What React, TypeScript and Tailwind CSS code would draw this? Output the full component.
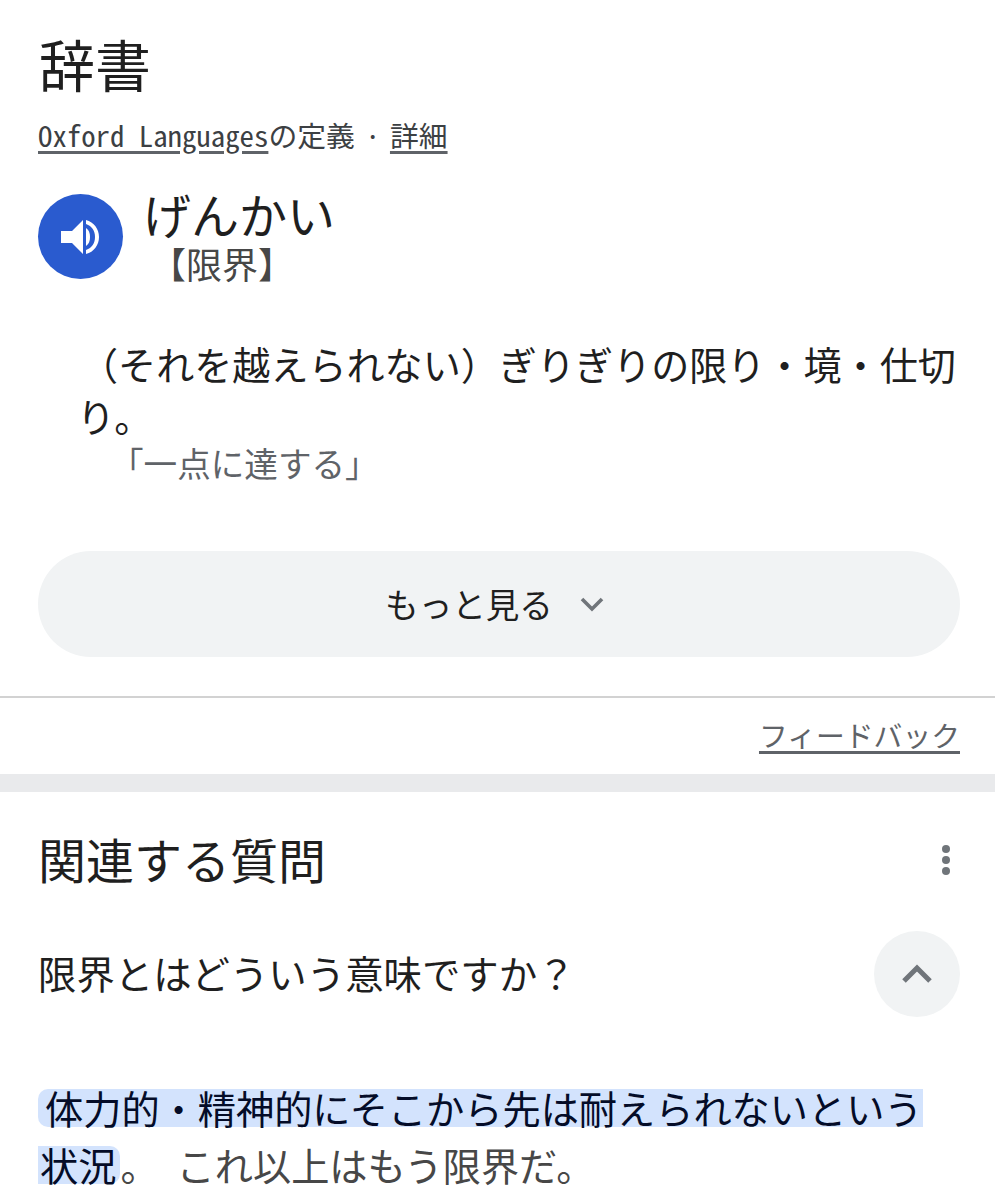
export default function App() {
  return (
    <div className="w-[995px] h-[1200px] overflow-hidden bg-white text-[#1f1f1f] font-['Noto_Sans_CJK_JP',sans-serif]">
      <section className="px-[38px]">
        <h1 className="ml-[1px] pt-[30px] text-[56px] leading-[66px] font-normal">辞書</h1>
        <p className="mt-[21px] text-[28.8px] leading-[36px] text-[#3c4043] whitespace-nowrap">
          <span className="underline decoration-[3px] decoration-[#5f6368] underline-offset-[4px] font-['Noto_Sans_Mono_CJK_JP',monospace]">Oxford Languages</span>
          の定義
          <span className="ml-[2px] mr-[1px] px-[8px]">·</span>
          <span className="underline decoration-[3px] decoration-[#5f6368] underline-offset-[4px]">詳細</span>
        </p>
        <div className="mt-[41px] flex items-start">
          <div className="flex h-[85px] w-[85px] items-center justify-center rounded-full bg-[#2a5bcf]">
            <svg className="ml-[2px]" width="44" height="44" viewBox="0 0 44 44" fill="white">
              <path d="M1 14h11L23 3v34L12 26H1z" transform="translate(0 2)" />
              <path d="M26 13c3 2 4 5 4 9s-1 7-4 9z" />
              <path d="M26 5c8 2 13 9 13 17s-5 15-13 17v-4c6-2 9-7 9-13s-3-11-9-13z" />
            </svg>
          </div>
          <div className="ml-[20px] -mt-[9px]">
            <div className="text-[48px] leading-[56px]">げんかい</div>
            <div className="ml-[7px] mt-[2px] text-[36px] leading-[40px] text-[#474747]">【限界】</div>
          </div>
        </div>
        <div className="mt-[55px] pl-[39px] text-[38.1px] leading-[52px] text-[#1f1f1f]">
          <div className="w-[885px] indent-[3px]">（それを越えられない）ぎりぎりの限り・境・仕切り。</div>
          <div className="pl-[33px] -mt-[2px] text-[33.6px] leading-[46px] text-[#5f6368]">「一点に達する」</div>
        </div>
        <button className="mt-[65px] flex h-[106px] w-[922px] items-center justify-center gap-[24px] rounded-[53px] bg-[#f1f3f4] pr-[6px] text-[33.6px]">
          <span>もっと見る</span>
          <svg width="30" height="30" viewBox="0 0 30 30" fill="none" stroke="#70757a" strokeWidth="3.6">
            <path d="M5 10l10 10 10-10" />
          </svg>
        </button>
      </section>
      <div className="mt-[39px] h-[2px] bg-[#d2d2d2]" />
      <div className="flex h-[76px] items-center justify-end pr-[35px] text-[28.8px] text-[#5f6368]">
        <span className="-mt-[2px] underline decoration-[3px] underline-offset-[4px]">フィードバック</span>
      </div>
      <div className="h-[18px] bg-[#e9eaec]" />
      <section className="px-[38px]">
        <div className="flex items-center justify-between pt-[38px]">
          <h2 className="text-[48px] leading-[60px] font-normal -mt-[2px]">関連する質問</h2>
          <svg className="mr-[5px] mt-[1px]" width="12" height="32" viewBox="0 0 12 32" fill="#70757a">
            <circle cx="6" cy="5" r="4" />
            <circle cx="6" cy="16" r="4" />
            <circle cx="6" cy="27" r="4" />
          </svg>
        </div>
        <div className="mt-[43px] flex items-center justify-between">
          <span className="text-[38.4px] leading-[56px] -mt-[4px]">限界とはどういう意味ですか？</span>
          <div className="-mr-[3px] flex h-[86px] w-[86px] items-center justify-center rounded-full bg-[#f1f3f4]">
            <svg width="32" height="22" viewBox="0 0 32 22" fill="none" stroke="#70757a" strokeWidth="5">
              <path d="M3 18L16 5l13 13" />
            </svg>
          </div>
        </div>
        <div className="mt-[72px] text-[38.2px] leading-[38px] text-[#474747]">
          <div className="w-fit rounded-l-[10px] bg-[#d3e3fd] pl-[7px] text-[#040c28] whitespace-nowrap">体力的・精神的にそこから先は耐えられないという</div>
          <div className="mt-[19px] flex whitespace-nowrap">
            <span className="rounded-r-[10px] bg-[#d3e3fd] pl-[2px] pr-[4px] text-[#040c28]">状況</span>
            <span>。<span className="ml-[18px]">これ以上はもう限界だ。</span></span>
          </div>
        </div>
      </section>
    </div>
  );
}
